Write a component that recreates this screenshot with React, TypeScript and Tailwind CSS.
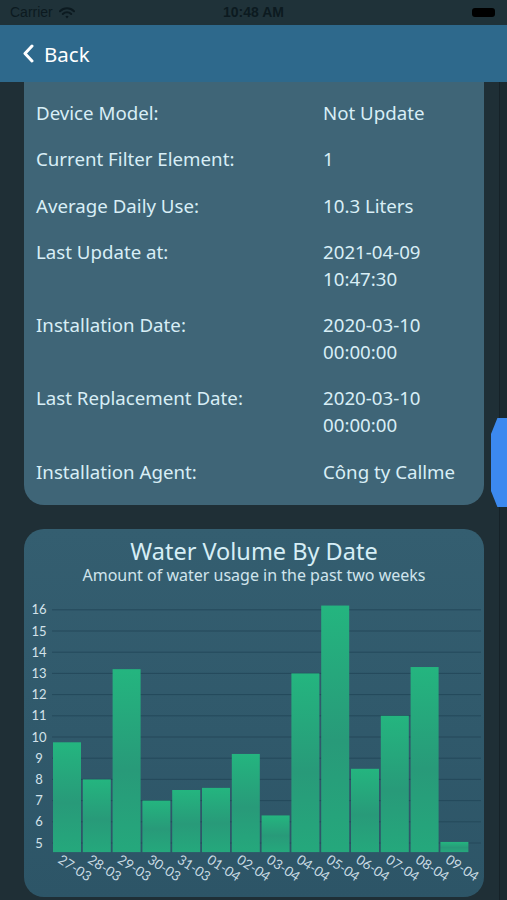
const rows: { label: string; value: string[] }[] = [
    { label: "Device Model:", value: ["Not Update"] },
    { label: "Current Filter Element:", value: ["1"] },
    { label: "Average Daily Use:", value: ["10.3 Liters"] },
    { label: "Last Update at:", value: ["2021-04-09", "10:47:30"] },
    { label: "Installation Date:", value: ["2020-03-10", "00:00:00"] },
    { label: "Last Replacement Date:", value: ["2020-03-10", "00:00:00"] },
    { label: "Installation Agent:", value: ["Công ty Callme"] },
];

const usage = [
    { day: "27-03", v: 9.75 },
    { day: "28-03", v: 8 },
    { day: "29-03", v: 13.2 },
    { day: "30-03", v: 7 },
    { day: "31-03", v: 7.5 },
    { day: "01-04", v: 7.6 },
    { day: "02-04", v: 9.2 },
    { day: "03-04", v: 6.3 },
    { day: "04-04", v: 13 },
    { day: "05-04", v: 16.2 },
    { day: "06-04", v: 8.5 },
    { day: "07-04", v: 11 },
    { day: "08-04", v: 13.3 },
    { day: "09-04", v: 5.05 },
];

// chart coords are relative to the card's left edge / svg top
const base = 263.6;
const unit = 21.2;
const yOf = (v: number) => base - (v - 4.5) * unit;

const UsageChart = () => {
    const ticks = [5, 6, 7, 8, 9, 10, 11, 12, 13, 14, 15, 16];
    return (
        <svg width={460} height={307} viewBox="0 0 460 307" className="block">
            <defs>
                <linearGradient id="bar" x1="0" y1="0" x2="0" y2="1">
                    <stop offset="0" stopColor="#24b57f" />
                    <stop offset="0.55" stopColor="#289a79" />
                    <stop offset="1" stopColor="#25a87c" />
                </linearGradient>
            </defs>
            {ticks.map((t) => (
                <g key={t}>
                    <line x1={28} x2={457} y1={yOf(t)} y2={yOf(t)} stroke="#24495b" strokeWidth={1} />
                    <text x={15} y={yOf(t) + 4.5} textAnchor="middle" fontSize={13} fill="#d3e2ea" fontFamily="Lato, sans-serif">
                        {t}
                    </text>
                </g>
            ))}
            {usage.map((d, i) => {
                const x = 29 + i * 29.8;
                const top = yOf(d.v);
                return (
                    <g key={d.day}>
                        <rect x={x} y={top} width={28} height={base - 1.5 - top} fill="url(#bar)" />
                        <text
                            x={x + 4}
                            y={272}
                            fontSize={13.5}
                            fill="#c9dbe3"
                            fontFamily="Lato, sans-serif"
                            transform={`rotate(33 ${x + 4} 272)`}
                        >
                            {d.day}
                        </text>
                    </g>
                );
            })}
        </svg>
    );
};

export default function App() {
    return (
        <div className="relative w-[507px] h-[900px] overflow-hidden bg-[#1f2f36] flex flex-col font-['Noto_Sans',sans-serif]">
            <div className="h-[25px] bg-[#1f3239] flex items-center justify-between px-[10px] text-[#0c1a20] text-[14px] shrink-0">
                <div className="flex items-center gap-[6px]">
                    <span className="font-['Liberation_Sans',sans-serif]">Carrier</span>
                    <svg width="16" height="12" viewBox="0 0 16 12">
                        <path d="M1 4.2a10 10 0 0 1 14 0" stroke="#0c1a20" strokeWidth="2" fill="none" strokeLinecap="round" />
                        <path d="M3.8 7a6 6 0 0 1 8.4 0" stroke="#0c1a20" strokeWidth="2" fill="none" strokeLinecap="round" />
                        <path d="M6.4 9.6 8 11.4 9.6 9.6a2.3 2.3 0 0 0-3.2 0z" fill="#0c1a20" />
                    </svg>
                </div>
                <span className="absolute left-1/2 -translate-x-1/2 font-semibold font-['Liberation_Sans',sans-serif]">10:48 AM</span>
                <div className="w-[23px] h-[9px] rounded-[3px] bg-black mr-[2px]" />
            </div>
            <div className="h-[57px] bg-[#2e698c] flex items-center pl-[22px] gap-[10px] text-white shrink-0">
                <svg width="12" height="19" viewBox="0 0 12 19">
                    <path d="M10 2 3 9.5 10 17" stroke="white" strokeWidth="3" fill="none" strokeLinecap="round" strokeLinejoin="round" />
                </svg>
                <span className="text-[20.5px] leading-[28px]">Back</span>
            </div>
            <div className="flex flex-col gap-[24px] pl-[24px] pr-[23px]">
                <div className="bg-[#3f6577] rounded-b-[20px] pl-[12px] pt-[17px] pb-[20px] grid grid-cols-[287px_1fr] gap-y-[19.3px] text-[18.7px] leading-[27px] text-[#d8eef6]">
                    {rows.map((r) => (
                        <div key={r.label} className="contents">
                            <div>{r.label}</div>
                            <div>
                                {r.value.map((v) => (
                                    <div key={v}>{v}</div>
                                ))}
                            </div>
                        </div>
                    ))}
                </div>
                <div className="h-[368px] rounded-[20px] bg-gradient-to-b from-[#345e70] to-[#2d5567] flex flex-col items-center pt-[8px] overflow-hidden">
                    <div className="text-[23.5px] leading-[28px] text-[#d6eef6]">Water Volume By Date</div>
                    <div className="text-[16px] leading-[20px] text-[#d0e4ec]">Amount of water usage in the past two weeks</div>
                    <div className="mt-[5px] self-stretch">
                        <UsageChart />
                    </div>
                </div>
            </div>
            <div className="absolute right-0 top-[82px] bottom-0 w-[8px] bg-[#1b2a30] border-l border-[#162228]" />
            <div className="absolute right-0 top-[418px] w-[16px] h-[89px] bg-[#3c89ef] [clip-path:polygon(40%_0,100%_0,100%_100%,40%_100%,0_82%,0_18%)] rounded-l-[4px]" />
        </div>
    );
}
